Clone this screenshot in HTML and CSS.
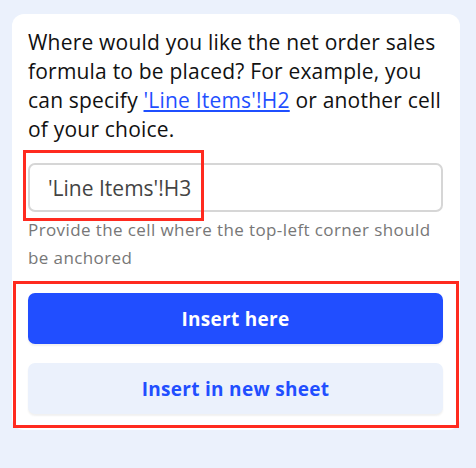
FILE: index.html
```html
<!DOCTYPE html>
<html lang="en">
<head>
    <meta charset="UTF-8">
    <title>Insert formula</title>
    <link rel="stylesheet" href="styles.css">
</head>
<body>
    <div class="card">
        <div class="content">
            <p class="question">
                Where would you like the net order sales<br>
                formula to be placed? For example, you<br>
                can specify <a href="#">'Line Items'!H2</a> or another cell<br>
                of your choice.
            </p>
            <div class="field">
                <input class="cell-input" type="text" value="'Line Items'!H3">
                <div class="mark mark-input"></div>
            </div>
            <p class="hint">Provide the cell where the top-left corner should be anchored</p>
        </div>
        <div class="actions">
            <button class="btn btn-primary">Insert here</button>
            <button class="btn btn-secondary">Insert in new sheet</button>
        </div>
    </div>
</body>
</html>
```

FILE: styles.css
```css
* {
    margin: 0;
    padding: 0;
    box-sizing: border-box;
}
body {
    background: #ebf1fc;
    font-family: "Open Sans", "Liberation Sans", sans-serif;
    color: #111;
}
.card {
    width: 448px;
    margin: 14px 0 0 12px;
    background: #fff;
    border-radius: 12px;
    padding-bottom: 2px;
}
.content {
    padding: 14px 17px 0 16px;
}
.question {
    font-size: 21px;
    line-height: 29px;
    letter-spacing: 0.2px;
    white-space: nowrap;
}
.question a {
    color: #1f4fff;
}
.field {
    position: relative;
    margin-top: 19px;
}
.cell-input {
    display: block;
    width: 100%;
    height: 49px;
    border: 2px solid #d6d6d6;
    border-radius: 7px;
    padding: 0 18px;
    font-family: inherit;
    font-size: 21px;
    color: #444;
    outline: none;
}
.mark {
    position: absolute;
    border: 3px solid #ff2a1f;
}
.mark-input {
    left: -5px;
    top: -13px;
    width: 181px;
    height: 71px;
}
.hint {
    font-size: 17px;
    line-height: 28px;
    letter-spacing: 0.4px;
    color: #777;
    margin-top: 4px;
}
.actions {
    display: flex;
    flex-direction: column;
    gap: 19px;
    margin: 9px 1px 0 1px;
    border: 3px solid #ff2a1f;
    padding: 9px 13px 11px 12px;
}
.btn {
    height: 51px;
    border: none;
    border-radius: 7px;
    font-family: inherit;
    font-size: 19px;
    font-weight: bold;
    letter-spacing: 0.3px;
    box-shadow: 0 2px 2px rgba(0, 0, 0, 0.06);
}
.btn-primary {
    background: #214eff;
    color: #fff;
}
.btn-secondary {
    background: #ebf1fc;
    color: #214eff;
}
```
